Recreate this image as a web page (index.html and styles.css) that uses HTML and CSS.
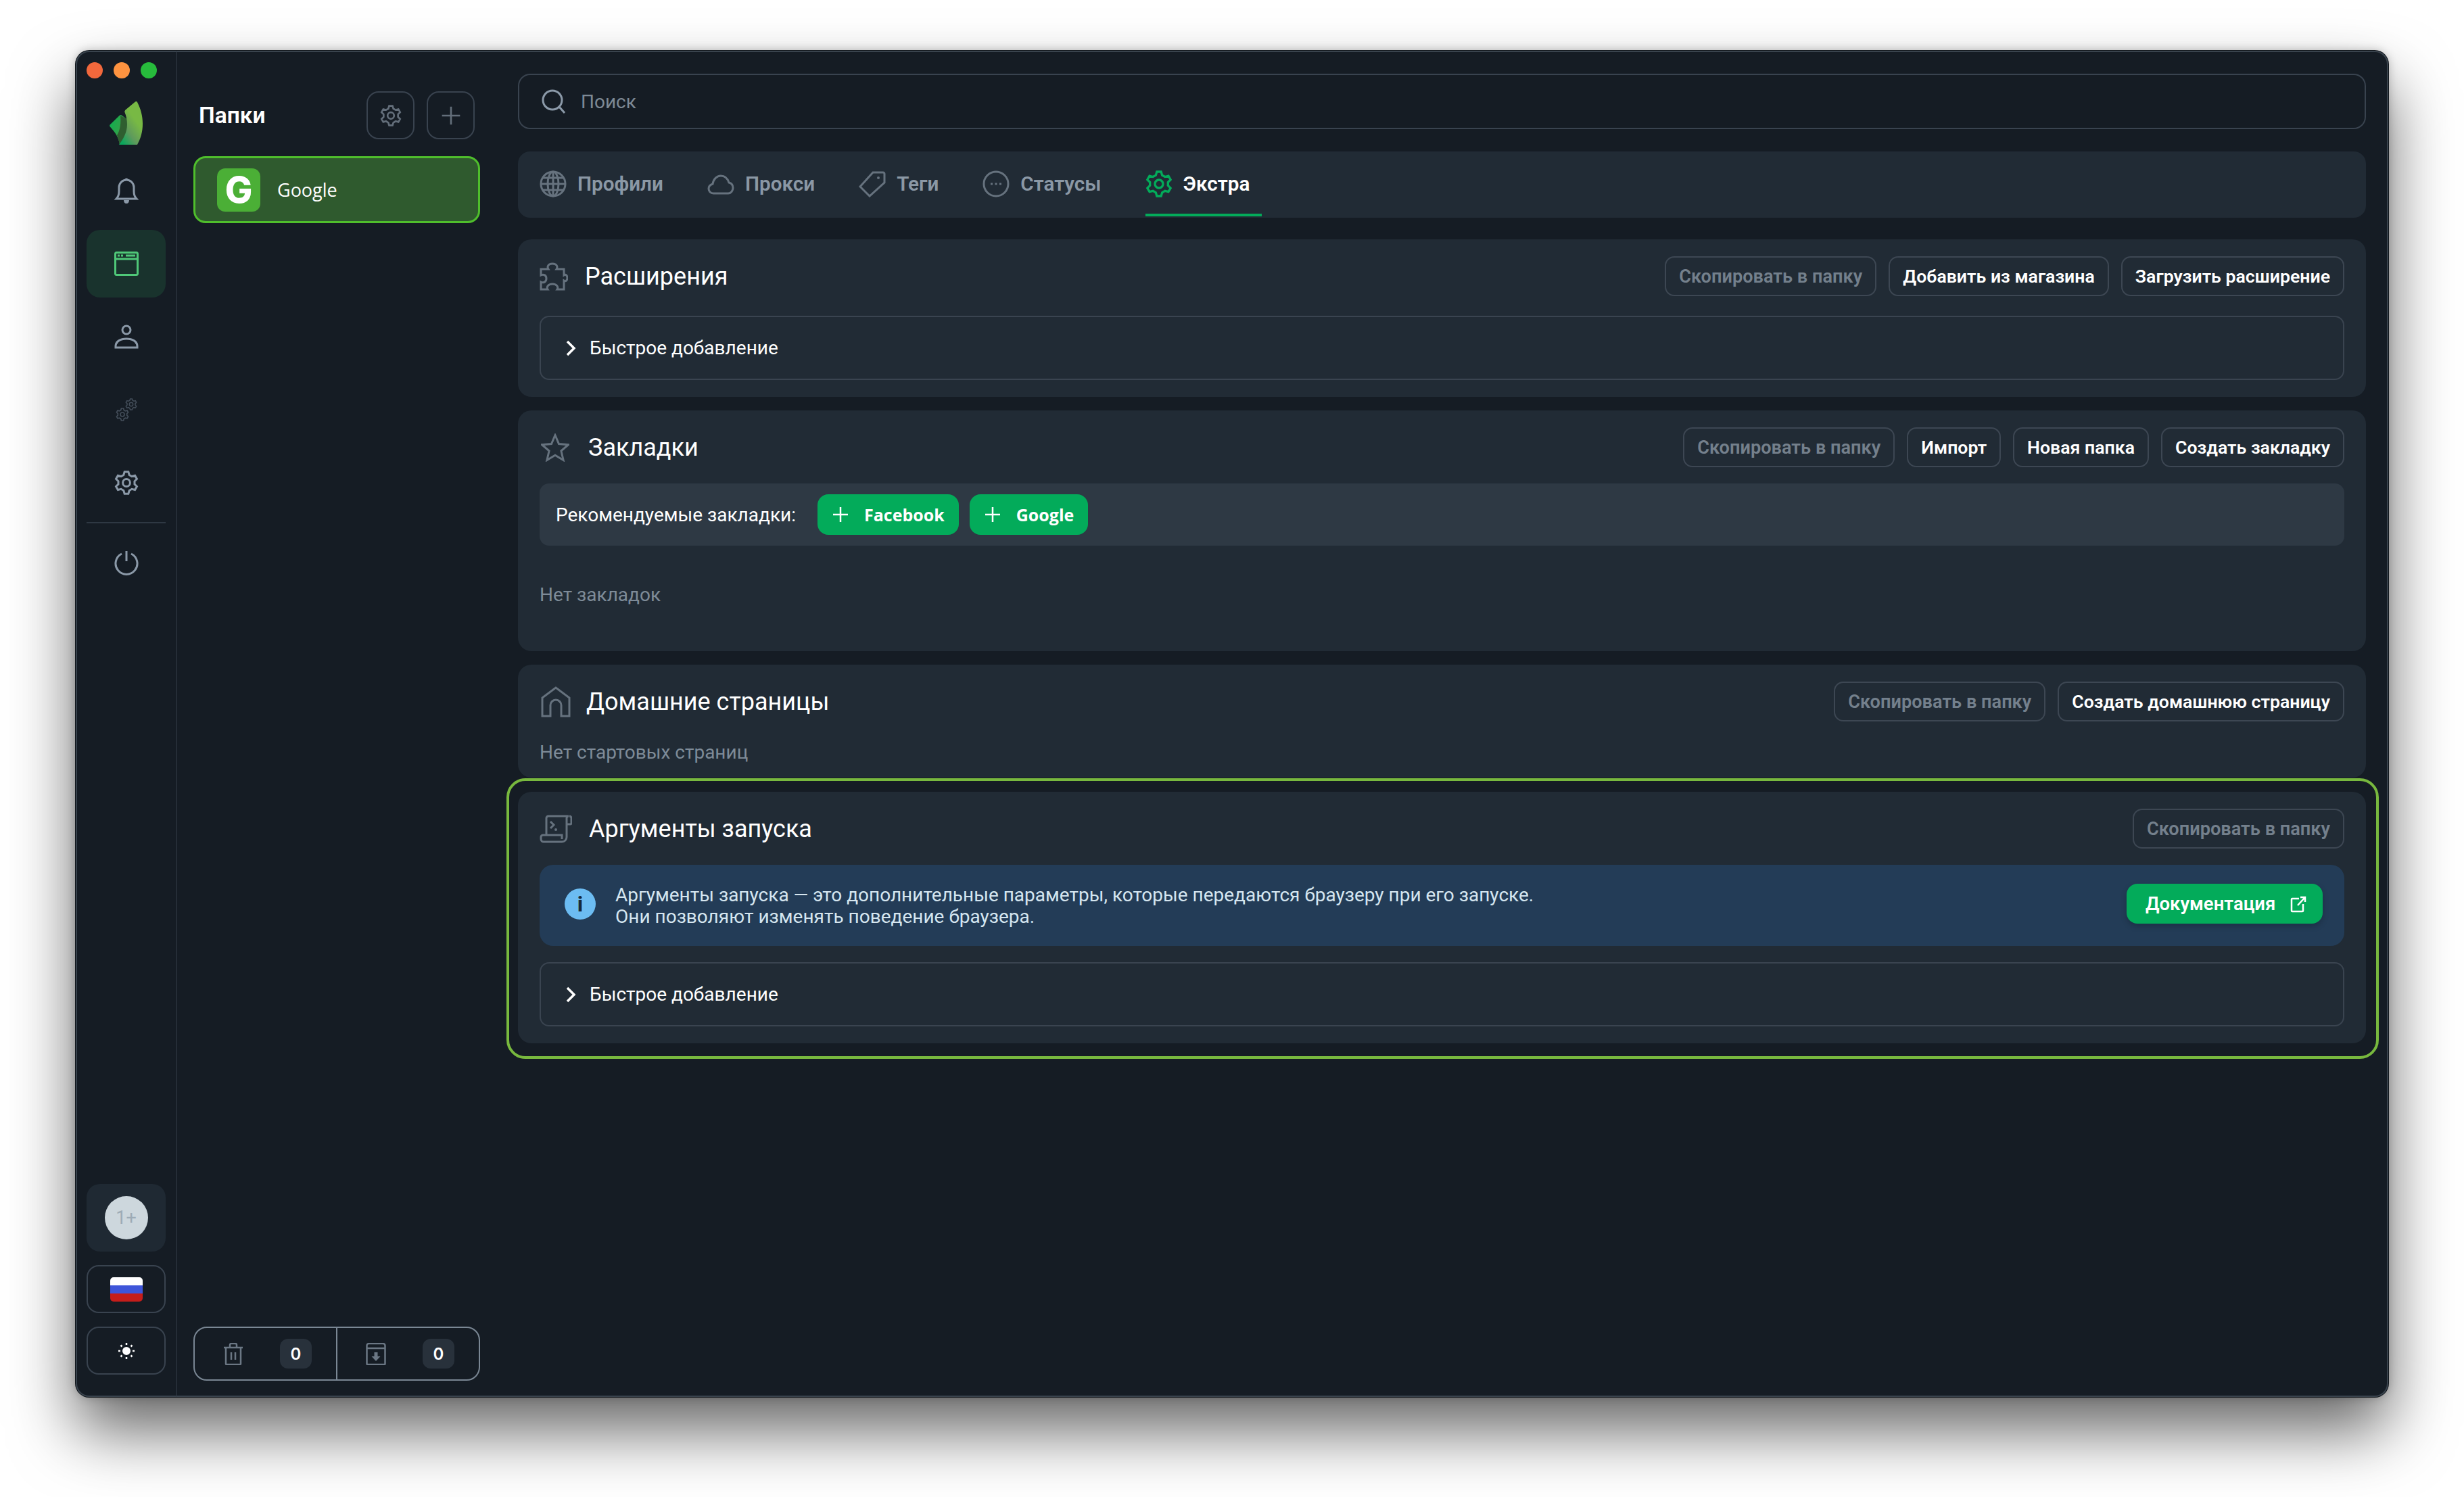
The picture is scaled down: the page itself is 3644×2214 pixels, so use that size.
FILE: index.html
```html
<!DOCTYPE html>
<html lang="ru">
<head>
    <meta charset="UTF-8">
    <title>Экстра</title>
    <link rel="stylesheet" href="styles.css">
</head>
<body>
    <div class="window">
        <!-- Left icon rail -->
        <aside class="rail">
            <div class="lights">
                <span class="light light-red"></span>
                <span class="light light-orange"></span>
                <span class="light light-green"></span>
            </div>
            <svg class="logo" viewBox="0 0 50 65">
                <defs>
                    <linearGradient id="leaf-right" x1="0.8" y1="0.2" x2="0.2" y2="1">
                        <stop offset="0.25" stop-color="#78b944"/>
                        <stop offset="0.65" stop-color="#5f9a5c"/>
                        <stop offset="1" stop-color="#0aa55c"/>
                    </linearGradient>
                    <linearGradient id="leaf-left" x1="0" y1="0.2" x2="1" y2="0.8">
                        <stop offset="0" stop-color="#0fae4f"/>
                        <stop offset="1" stop-color="#4a9a45"/>
                    </linearGradient>
                </defs>
                <path fill="url(#leaf-left)" d="M0.6 35.5 15 21.6c1-.8 2-.8 3 0l8 6L15 65 C14 55 8 46 .8 38.5c-.8-1-.8-2-.2-3z"/>
                <path fill="#2f5f30" d="M15 21.5 26 27l4 12-9 26h-6c-1-6-2.500-10-4-14 5-8 6-18 5-29.500z"/>
                <path fill="url(#leaf-right)" d="M23 14 38 1.500c1-.9 2.500-.6 3 .5 5 10 8 20 8 32 0 12-3 22-8 31H14c6-8 12-18 12-30 0-7-1.500-13-3.500-18-.3-1-.2-2 .5-2.500z"/>
            </svg>
            <nav class="rail-nav">
                <a class="rail-item">
                    <svg class="rail-icon" viewBox="0 0 36 40"><path d="M3 32c3-3 4-6 4-11v-6c0-6 5-11 11-11s11 5 11 11v6c0 5 1 8 4 11z"/><path class="solid" d="M18 1.500a2.500 2.500 0 0 1 2.500 3h-5a2.500 2.500 0 0 1 2.500-3zM14 34h8c0 3-1.500 5-4 5s-4-2-4-5z"/></svg>
                </a>
                <a class="rail-item rail-item-active">
                    <svg class="rail-icon" viewBox="0 0 36 36"><rect x="1.500" y="1.500" width="33" height="33" rx="2"/><path d="M1.500 11h33"/><path class="solid" d="M5 4.500h3v3H5zM10 4.500h3v3h-3zM17 4.500h14v3H17z"/></svg>
                </a>
                <a class="rail-item">
                    <svg class="rail-icon" viewBox="0 0 36 36"><circle cx="18" cy="8" r="6"/><path d="M2 34v-2c0-7 7-11 16-11s16 4 16 11v2z"/></svg>
                </a>
                <a class="rail-item rail-item-dim">
                    <svg class="rail-icon rail-icon-gears" viewBox="0 0 32 34">
                        <use href="#gear" x="0" y="14" width="20" height="20"/>
                        <use href="#gear" x="14" y="0" width="18" height="18"/>
                    </svg>
                </a>
                <a class="rail-item">
                    <svg class="rail-icon rail-icon-gear" viewBox="0 0 24 24"><use href="#gear"/></svg>
                </a>
            </nav>
            <div class="rail-line"></div>
            <a class="rail-item">
                <svg class="rail-icon" viewBox="0 0 36 36"><path d="M11 5a16 16 0 1 0 14 0"/><path d="M18 1v15"/></svg>
            </a>
            <div class="rail-bottom">
                <div class="avatar-box"><span class="avatar">1+</span></div>
                <div class="square-btn"><span class="flag"><i class="flag-white"></i><i class="flag-blue"></i><i class="flag-red"></i></span></div>
                <div class="square-btn">
                    <svg class="sun" viewBox="0 0 26 26"><circle class="solid" cx="13" cy="13" r="6"/><path d="M13 1v3M13 22v3M1 13h3M22 13h3M4.500 4.500l2 2M19.500 19.500l2 2M21.500 4.500l-2 2M6.500 19.500l-2 2"/></svg>
                </div>
            </div>
        </aside>

        <!-- Folders column -->
        <section class="folders">
            <header class="folders-head">
                <h2 class="folders-title">Папки</h2>
                <button class="icon-btn"><svg viewBox="0 0 24 24"><use href="#gear"/></svg></button>
                <button class="icon-btn"><svg viewBox="0 0 24 24"><path d="M12 2v20M2 12h20"/></svg></button>
            </header>
            <div class="folder-item">
                <span class="folder-logo">G</span>
                <span class="folder-name">Google</span>
            </div>
            <div class="folders-foot">
                <div class="foot-cell">
                    <svg class="foot-icon" viewBox="0 0 30 33"><path d="M1 7h28M4 7v24a1 1 0 0 0 1 1h20a1 1 0 0 0 1-1V7M10 7V3a2 2 0 0 1 2-2h6a2 2 0 0 1 2 2v4M12 14v11M18 14v11"/></svg>
                    <span class="count">0</span>
                </div>
                <div class="foot-cell">
                    <svg class="foot-icon" viewBox="0 0 30 33"><path d="M1.500 8V4a3 3 0 0 1 3-3h21a3 3 0 0 1 3 3v4M1.500 8h27v23a1 1 0 0 1-1 1h-25a1 1 0 0 1-1-1z"/><path class="solid" d="M12.500 14h5v6h4L15 27l-6.500-7h4z"/></svg>
                    <span class="count">0</span>
                </div>
            </div>
        </section>

        <!-- Main content -->
        <main class="main">
            <div class="search">
                <svg class="search-icon" viewBox="0 0 36 36"><circle cx="16" cy="16" r="14"/><path d="M26 26l8 9"/></svg>
                <span class="search-text">Поиск</span>
            </div>

            <div class="tabs">
                <a class="tab">
                    <svg class="tab-icon" viewBox="0 0 40 40"><circle cx="20" cy="20" r="18"/><ellipse cx="20" cy="20" rx="8" ry="18"/><path d="M20 2v36M2 20h36M5 11h30M5 29h30"/></svg>
                    <span>Профили</span>
                </a>
                <a class="tab">
                    <svg class="tab-icon" viewBox="0 0 40 40"><path d="M9 34c-4 0-7-3-7-7 0-4 3-6 6-7 1-7 6-12 12-12 6 0 10 4 12 10 4 1 6 4 6 8s-3 8-7 8z"/></svg>
                    <span>Прокси</span>
                </a>
                <a class="tab">
                    <svg class="tab-icon" viewBox="0 0 40 40"><path d="M21 3h15c1 0 2 1 2 2v13L16 38 2 24z"/><circle class="solid" cx="29" cy="11" r="2"/></svg>
                    <span>Теги</span>
                </a>
                <a class="tab">
                    <svg class="tab-icon" viewBox="0 0 40 40"><circle cx="20" cy="20" r="18"/><path class="solid" d="M12 18.500h3v3h-3zM18.500 18.500h3v3h-3zM25 18.500h3v3h-3z"/></svg>
                    <span>Статусы</span>
                </a>
                <a class="tab tab-active">
                    <svg class="tab-icon" viewBox="0 0 24 24"><use href="#gear"/></svg>
                    <span>Экстра</span>
                </a>
            </div>

            <section class="panel panel-ext">
                <header class="panel-head">
                    <svg class="panel-icon panel-icon-ext" viewBox="0 0 42 42"><path d="M2 10H13C11 7 12 2 19 2C26 2 27 7 25 10H36V19C39 17 41 20 41 23C41 26 39 29 36 27V40H26C28 37 26 32 19 32C12 32 10 37 12 40H2V29C6 31 10 29 10 24C10 19 6 17 2 19Z"/></svg>
                    <h3 class="panel-title">Расширения</h3>
                    <div class="panel-actions">
                        <button class="btn btn-muted">Скопировать в папку</button>
                        <button class="btn">Добавить из магазина</button>
                        <button class="btn">Загрузить расширение</button>
                    </div>
                </header>
                <div class="collapse">
                    <svg class="chevron" viewBox="0 0 16 24"><path d="M3 2l10 10L3 22"/></svg>
                    <span>Быстрое добавление</span>
                </div>
            </section>

            <section class="panel">
                <header class="panel-head">
                    <svg class="panel-icon panel-icon-star" viewBox="0 0 42 42"><path d="M21 2.500l5.500 13 14 1.200-10.600 9.200 3.200 13.600L21 32.300 8.900 39.500l3.200-13.600L1.500 16.700l14-1.200z"/></svg>
                    <h3 class="panel-title">Закладки</h3>
                    <div class="panel-actions">
                        <button class="btn btn-muted">Скопировать в папку</button>
                        <button class="btn">Импорт</button>
                        <button class="btn">Новая папка</button>
                        <button class="btn">Создать закладку</button>
                    </div>
                </header>
                <div class="recommended">
                    <span class="recommended-label">Рекомендуемые закладки:</span>
                    <button class="green-btn green-btn-add"><svg viewBox="0 0 22 22"><path d="M11 0v22M0 11h22"/></svg>Facebook</button>
                    <button class="green-btn green-btn-add"><svg viewBox="0 0 22 22"><path d="M11 0v22M0 11h22"/></svg>Google</button>
                </div>
                <p class="empty empty-bookmarks">Нет закладок</p>
            </section>

            <section class="panel panel-home">
                <header class="panel-head">
                    <svg class="panel-icon panel-icon-home" viewBox="0 0 44 46"><path d="M2 44V17L22 2l20 15v27H30V28a8 8 0 0 0-16 0v16z"/></svg>
                    <h3 class="panel-title">Домашние страницы</h3>
                    <div class="panel-actions">
                        <button class="btn btn-muted">Скопировать в папку</button>
                        <button class="btn">Создать домашнюю страницу</button>
                    </div>
                </header>
                <p class="empty">Нет стартовых страниц</p>
            </section>

            <section class="panel panel-marked">
                <header class="panel-head">
                    <svg class="panel-icon panel-icon-script" viewBox="0 0 48 42"><path d="M10 30V5a3 3 0 0 1 3-3h30a3 3 0 0 0-3 3v28a7 7 0 0 1-7 7H6a4 4 0 0 1-4-4v-3a3 3 0 0 1 3-3h28v6M40 14h5a2 2 0 0 0 2-2V5a3 3 0 0 0-3-3M16 10l5 5-5 5"/><circle class="solid" cx="24" cy="22" r="2"/></svg>
                    <h3 class="panel-title">Аргументы запуска</h3>
                    <div class="panel-actions">
                        <button class="btn btn-muted">Скопировать в папку</button>
                    </div>
                </header>
                <div class="info">
                    <span class="info-badge">i</span>
                    <p class="info-text">Аргументы запуска — это дополнительные параметры, которые передаются браузеру при его запуске.<br>Они позволяют изменять поведение браузера.</p>
                    <button class="green-btn green-btn-doc">Документация<svg viewBox="0 0 24 24"><path d="M13 4H3a1 1 0 0 0-1 1v17a1 1 0 0 0 1 1h15a1 1 0 0 0 1-1V12M11 14L22 2M15 2h7v7"/></svg></button>
                </div>
                <div class="collapse">
                    <svg class="chevron" viewBox="0 0 16 24"><path d="M3 2l10 10L3 22"/></svg>
                    <span>Быстрое добавление</span>
                </div>
            </section>
        </main>
    </div>

    <svg class="sprite" width="0" height="0">
        <symbol id="gear" viewBox="0 0 24 24">
            <path d="M10.100 1.200h3.800l.9 3.100 2.500 1.400 3.100-.8 1.900 3.300-2.300 2.300v2.900l2.300 2.300-1.900 3.300-3.100-.8-2.500 1.500-.9 3.100h-3.800l-.9-3.100-2.500-1.500-3.100.8-1.900-3.300 2.300-2.300v-2.900L1.700 8.200l1.900-3.300 3.100.8 2.500-1.400z"/>
            <circle cx="12" cy="12" r="3.600"/>
        </symbol>
    </svg>
</body>
</html>
```

FILE: styles.css
```css
* {
    box-sizing: border-box;
}

body {
    margin: 0;
    padding: 75px 112px 148px;
    height: 2214px;
    background-color: #ffffff;
    font-family: Roboto, "Noto Sans", sans-serif;
    color: #ffffff;
    overflow: hidden;
}

svg {
    fill: none;
    stroke: currentColor;
}

.solid {
    fill: currentColor;
    stroke: none;
}

.sprite {
    position: absolute;
}

button {
    font-family: inherit;
    cursor: pointer;
}

.window {
    display: flex;
    height: 1991px;
    background-color: #151c24;
    border-radius: 20px;
    box-shadow: inset 0 0 0 2px #39434d, 0 0 0 1px #10151a, 0 50px 95px rgba(0, 0, 0, 0.6), 0 0 14px rgba(0, 0, 0, 0.25);
}

/* Icon rail */
.rail {
    width: 150px;
    flex-shrink: 0;
    display: flex;
    flex-direction: column;
    padding: 17px 16px 33px;
    border-right: 1px solid #333d48;
}

.lights {
    display: flex;
    gap: 16px;
}

.light {
    width: 24px;
    height: 24px;
    border-radius: 50%;
}

.light-red {
    background-color: #f2683c;
}

.light-orange {
    background-color: #fe9340;
}

.light-green {
    background-color: #27bb3c;
}

.logo {
    width: 50px;
    height: 65px;
    margin: 33px 0 18px 34px;
    stroke: none;
}

.rail-nav {
    display: flex;
    flex-direction: column;
    gap: 8px;
}

.rail-item {
    height: 100px;
    display: flex;
    align-items: center;
    justify-content: center;
    color: #8b99a8;
    border-radius: 20px;
}

.rail-item-active {
    background-color: #19332d;
    color: #4fc878;
}

.rail-item-dim {
    color: #434d59;
}

.rail-icon {
    width: 36px;
    height: 40px;
    stroke-width: 3;
}

.rail-icon-gears {
    width: 32px;
    height: 34px;
    stroke-width: 2;
}

.rail-icon-gear {
    stroke-width: 2;
}

.rail-line {
    height: 2px;
    margin: 8px 0;
    background-color: #2e3843;
}

.rail-bottom {
    margin-top: auto;
    display: flex;
    flex-direction: column;
    gap: 20px;
}

.avatar-box {
    height: 100px;
    display: flex;
    align-items: center;
    justify-content: center;
    background-color: #1f2933;
    border-radius: 20px;
}

.avatar {
    width: 64px;
    height: 64px;
    display: flex;
    align-items: center;
    justify-content: center;
    border-radius: 50%;
    background-color: #cdd7dd;
    color: #9dabb6;
    font-size: 27px;
}

.square-btn {
    height: 71px;
    display: flex;
    align-items: center;
    justify-content: center;
    border: 2px solid #39434f;
    border-radius: 18px;
}

.flag {
    width: 48px;
    height: 36px;
    display: flex;
    flex-direction: column;
    border-radius: 5px;
    overflow: hidden;
}

.flag i {
    flex: 1;
}

.flag-white {
    background-color: #ffffff;
}

.flag-blue {
    background-color: #3e55d9;
}

.flag-red {
    background-color: #c51d1a;
}

.sun {
    width: 26px;
    height: 26px;
    stroke-width: 2.500;
}

/* Folders */
.folders {
    width: 474px;
    flex-shrink: 0;
    display: flex;
    flex-direction: column;
    padding: 60px 26px 24px 24px;
}

.folders-head {
    display: flex;
    align-items: center;
    gap: 18px;
    padding-left: 8px;
    padding-right: 8px;
}

.folders-title {
    flex: 1;
    margin: 0;
    font-size: 33.500px;
    font-weight: 600;
}

.icon-btn {
    width: 71px;
    height: 71px;
    display: flex;
    align-items: center;
    justify-content: center;
    padding: 0;
    background: none;
    border: 2px solid #39434f;
    border-radius: 18px;
    color: #636e7a;
}

.icon-btn svg {
    width: 32px;
    height: 32px;
    stroke-width: 2;
}

.folder-item {
    height: 99px;
    margin-top: 25px;
    display: flex;
    align-items: center;
    gap: 25px;
    padding-left: 32px;
    background-color: #2f5a2e;
    border: 3px solid #4fbe2c;
    border-radius: 18px;
}

.folder-logo {
    width: 64px;
    height: 64px;
    display: flex;
    align-items: center;
    justify-content: center;
    background-color: #4baf36;
    border-radius: 12px;
    font-family: Inter, sans-serif;
    font-size: 54px;
    font-weight: 800;
    line-height: 1;
}

.folder-name {
    font-family: "Open Sans", sans-serif;
    font-size: 27px;
}

.folders-foot {
    height: 80px;
    margin-top: auto;
    display: flex;
    border: 2px solid #7a8794;
    border-radius: 20px;
}

.foot-cell {
    flex: 1;
    display: flex;
    align-items: center;
    justify-content: space-between;
    padding: 0 36px 0 42px;
    color: #6b7784;
}

.foot-cell + .foot-cell {
    border-left: 2px solid #7a8794;
}

.foot-icon {
    width: 30px;
    height: 33px;
    stroke-width: 2.500;
}

.count {
    width: 47px;
    height: 44px;
    display: flex;
    align-items: center;
    justify-content: center;
    background-color: #28313b;
    border-radius: 12px;
    color: #ffffff;
    font-family: Inter, sans-serif;
    font-size: 24px;
    font-weight: 600;
}

/* Main column */
.main {
    flex: 1;
    min-width: 0;
    display: flex;
    flex-direction: column;
    gap: 20px;
    padding: 34px 33px 0 30px;
}

.search {
    height: 82px;
    flex-shrink: 0;
    display: flex;
    align-items: center;
    gap: 22px;
    padding-left: 33px;
    margin-bottom: 13px;
    border: 2px solid #39434f;
    border-radius: 18px;
}

.search-icon {
    width: 36px;
    height: 36px;
    color: #8b99a8;
    stroke-width: 3;
}

.search-text {
    color: #7d8995;
    font-size: 28px;
}

.tabs {
    height: 98px;
    flex-shrink: 0;
    display: flex;
    align-items: flex-start;
    gap: 47px;
    padding: 0 32px;
    margin-bottom: 12px;
    background-color: #212b35;
    border-radius: 18px;
}

.tab {
    height: 96px;
    display: flex;
    align-items: center;
    gap: 16px;
    padding: 3px 18px 0 0;
    border-bottom: 4px solid transparent;
    color: #8b98a5;
    font-size: 29.700px;
    font-weight: 600;
}

.tab-icon {
    width: 40px;
    height: 40px;
    stroke-width: 3;
    color: #66727e;
}

.tab-active {
    color: #ffffff;
    border-bottom-color: #03ab5a;
}

.tab-active .tab-icon {
    color: #03ab5a;
    stroke-width: 2;
}

/* Panels */
.panel {
    flex-shrink: 0;
    padding: 25px 32px;
    background-color: #212b35;
    border-radius: 20px;
}

.panel-home {
    padding-bottom: 19px;
}

.panel-marked {
    position: relative;
    margin-top: 1px;
}

.panel-marked::after {
    content: "";
    position: absolute;
    inset: -20px -19px -23px -17px;
    border: 4px solid #78b83e;
    border-radius: 28px;
    pointer-events: none;
}

.panel-head {
    height: 59px;
    display: flex;
    align-items: center;
    margin-bottom: 24px;
}

.panel-ext .panel-head {
    margin-bottom: 29px;
}

.panel-home .panel-head {
    margin-bottom: 28px;
}

.panel-icon {
    flex-shrink: 0;
    color: #66727e;
    stroke-width: 3;
}

.panel-icon-ext {
    width: 42px;
    height: 42px;
    margin-right: 25px;
}

.panel-icon-star {
    width: 42px;
    height: 42px;
    margin-left: 2px;
    margin-right: 28px;
}

.panel-icon-home {
    width: 44px;
    height: 46px;
    margin-left: 2px;
    margin-right: 23px;
}

.panel-icon-script {
    width: 48px;
    height: 42px;
    margin-right: 25px;
}

.panel-title {
    flex: 1;
    margin: 0;
    font-size: 36px;
    font-weight: 400;
}

.panel-actions {
    display: flex;
    gap: 18px;
}

.btn {
    height: 59px;
    padding: 0 19px;
    background: none;
    border: 2px solid #3d4753;
    border-radius: 14px;
    color: #ffffff;
    font-size: 26.700px;
    font-weight: 600;
}

.btn-muted {
    color: #74808c;
    font-size: 27.200px;
}

.collapse {
    height: 95px;
    display: flex;
    align-items: center;
    gap: 20px;
    padding-left: 36px;
    border: 2px solid #3a4450;
    border-radius: 14px;
    font-size: 28px;
}

.chevron {
    width: 16px;
    height: 24px;
    stroke-width: 3.500;
}

.recommended {
    height: 92px;
    display: flex;
    align-items: center;
    padding-left: 24px;
    background-color: #2e3944;
    border-radius: 14px;
}

.recommended-label {
    margin-right: 32px;
    font-size: 28px;
}

.green-btn {
    height: 60px;
    display: flex;
    align-items: center;
    border: none;
    border-radius: 16px;
    background-color: #03ab5a;
    color: #ffffff;
    font-family: "Open Sans", sans-serif;
    font-size: 25px;
    font-weight: 700;
}

.green-btn-add {
    gap: 24px;
    padding: 0 21px 0 23px;
    margin-right: 16px;
}

.green-btn-add svg {
    width: 22px;
    height: 22px;
    stroke-width: 2.500;
}

.empty {
    margin: 0;
    color: #7e8b98;
    font-size: 28px;
    line-height: 36px;
}

.empty-bookmarks {
    padding: 55px 0 40px;
}

.info {
    height: 120px;
    display: flex;
    align-items: center;
    padding: 0 32px 0 37px;
    margin-bottom: 24px;
    background-color: #233c57;
    border-radius: 20px;
}

.info-badge {
    width: 46px;
    height: 46px;
    flex-shrink: 0;
    display: flex;
    align-items: center;
    justify-content: center;
    margin: 0 29px 5px 0;
    border-radius: 50%;
    background-color: #6cbcf2;
    color: #16283c;
    font-size: 32px;
    font-weight: 700;
}

.info-text {
    flex: 1;
    margin: 1px 0 0;
    color: #d5e6f0;
    font-size: 28px;
    line-height: 32px;
}

.green-btn-doc {
    width: 290px;
    height: 59px;
    gap: 22px;
    padding: 0 0 0 28px;
    margin-bottom: 5px;
    font-family: Roboto, sans-serif;
    font-size: 27.500px;
    font-weight: 600;
    box-shadow: 0 4px 10px rgba(0, 0, 0, 0.2);
}

.green-btn-doc svg {
    width: 24px;
    height: 26px;
    stroke-width: 2.500;
}
```
